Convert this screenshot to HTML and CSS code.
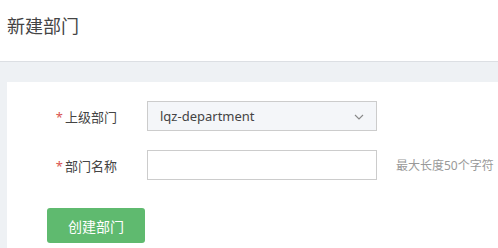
FILE: index.html
```html
<!DOCTYPE html>
<html lang="zh-CN">
<head>
  <meta charset="UTF-8">
  <title>新建部门</title>
  <link rel="stylesheet" href="styles.css">
</head>
<body>

<header class="page-head">
  <h1>新建部门</h1>
</header>

<main class="page-body">
  <form class="card">
    <div class="form-row">
      <label class="form-label"><span class="req">*</span>上级部门</label>
      <div class="select-box">
        <span>lqz-department</span>
        <svg class="chevron" width="10" height="6" viewBox="0 0 10 6">
          <path d="M1 1 L5 5 L9 1" fill="none" stroke="#888" stroke-width="1.1"/>
        </svg>
      </div>
    </div>
    <div class="form-row">
      <label class="form-label"><span class="req">*</span>部门名称</label>
      <input class="text-input" type="text">
      <span class="hint">最大长度50个字符</span>
    </div>
    <div class="form-actions">
      <button type="button" class="btn-green">创建部门</button>
    </div>
  </form>
</main>

</body>
</html>
```

FILE: styles.css
```css
body {
  margin: 0;
  font-family: "Noto Sans", "Noto Sans CJK SC", sans-serif;
  background: #eef1f4;
  color: #333;
}
.page-head {
  background: #fff;
  height: 61px;
  border-bottom: 1px solid #dcdfe3;
  display: flex;
  align-items: center;
  padding-left: 7px;
}
.page-head h1 {
  margin: 0 0 12px;
  font-size: 18px;
  font-weight: normal;
  color: #444;
}
.page-body {
  padding: 20px 0 0 7px;
}
.card {
  background: #fff;
  padding: 19px 0 10px 40px;
}
.form-row {
  display: flex;
  align-items: center;
  height: 30px;
  margin-bottom: 19px;
}
.form-label {
  width: 100px;
  box-sizing: border-box;
  padding-right: 30px;
  text-align: right;
  font-size: 13px;
  color: #444;
}
.req {
  color: #d9534f;
  margin-right: 2px;
}
.select-box {
  width: 230px;
  height: 30px;
  box-sizing: border-box;
  border: 1px solid #ccc;
  background: #f4f6f9;
  display: flex;
  align-items: center;
  justify-content: space-between;
  padding: 0 12px;
  font-size: 13px;
  color: #444;
}
.chevron {
  margin-top: 1px;
}
.text-input {
  width: 230px;
  height: 30px;
  box-sizing: border-box;
  border: 1px solid #ccc;
  margin: 0;
}
.hint {
  font-size: 12px;
  color: #999;
  margin-left: 19px;
}
.form-actions {
  padding-top: 9px;
}
.btn-green {
  width: 98px;
  height: 35px;
  border: none;
  border-radius: 3px;
  background: #5fba6f;
  color: #fff;
  font-family: inherit;
  font-size: 14px;
}
```
